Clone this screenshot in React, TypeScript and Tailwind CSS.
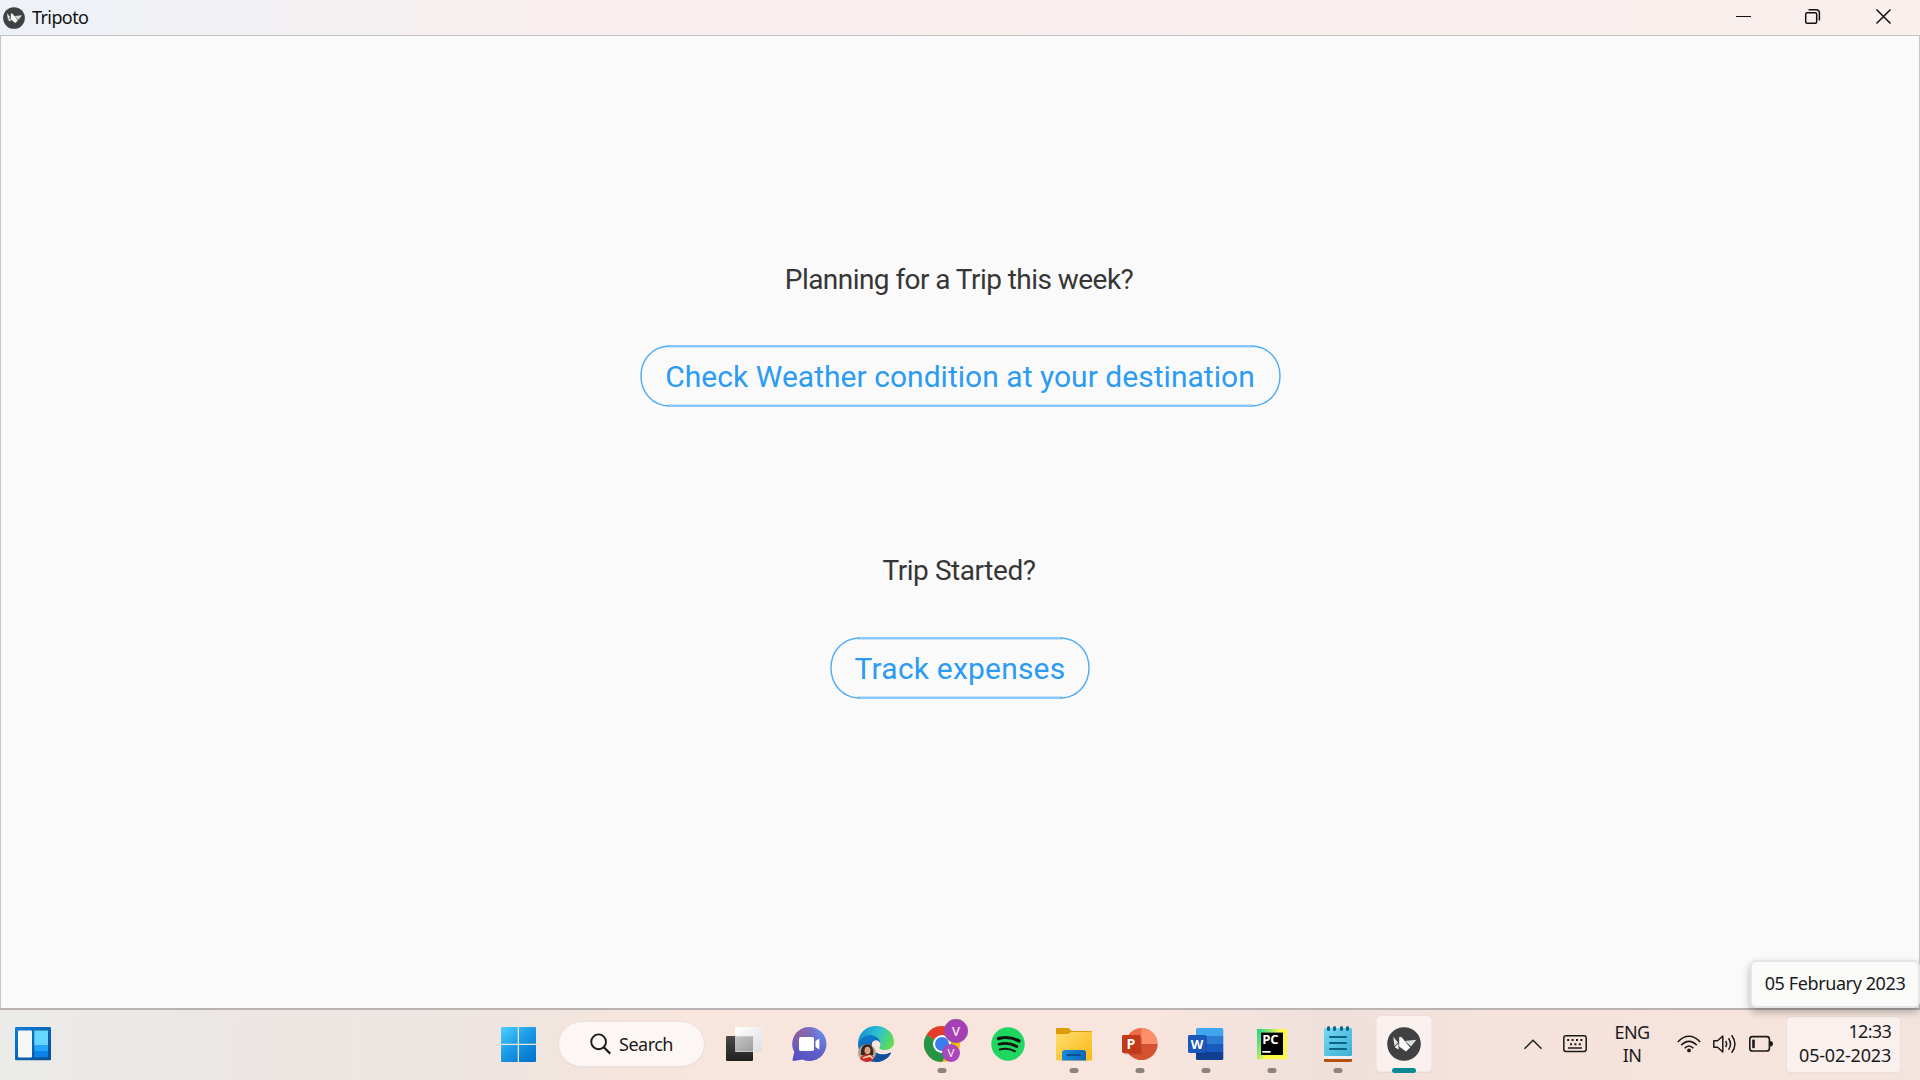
import type { ReactNode } from "react";

/* Bird emblem in a dark disc, drawn on a 34x34 grid. */
function KivyMark() {
  return (
    <>
      <circle cx="17" cy="17" r="16.8" fill="#404143" />
      <path d="M6.2 9.8 L11 15.4 L7.6 19.2 Z" fill="#e8e8e8" />
      <path d="M7.8 20.2 L11.4 16.6 L11.6 22.6 Z" fill="#fff" />
      <path d="M12.2 10 L14.4 10 L23.2 20.4 L19 24.6 L12.2 19.4 Z" fill="#fafafa" />
      <path d="M18 14 L29.4 12.8 L24 19.6 Z" fill="#dcdcdc" />
    </>
  );
}

function Cell({ children, running = false, label }: { children: ReactNode; running?: boolean; label: string }) {
  return (
    <div className="h-[70px] w-[66px] shrink-0" aria-label={label}>
      <svg width="66" height="70" viewBox="0 0 66 70">
        {children}
        {running && <rect x="28.5" y="58" width="9" height="5" rx="2.5" fill="#8d837f" />}
      </svg>
    </div>
  );
}

function Heading({ children, spacing }: { children: ReactNode; spacing: string }) {
  return (
    <h2 className={`flex h-[40px] items-center justify-center whitespace-nowrap text-[28px] leading-[40px] text-[#363636] ${spacing}`}>
      {children}
    </h2>
  );
}

/* Pill button: pale straight edges joined by finer, darker arcs. */
function OutlineButton({ children, width, className }: { children: ReactNode; width: number; className: string }) {
  const r = width - 28;
  return (
    <button
      className={`relative flex h-[62px] items-center justify-center whitespace-nowrap text-[30px] leading-[40px] text-[#2b9bf4] ${className}`}
    >
      <svg className="absolute inset-0" width={width} height="62" viewBox={`0 0 ${width} 62`} fill="none">
        <path d={`M28 1.2 H${r} M28 60.9 H${r}`} stroke="#8cc8f9" strokeWidth="2.6" />
        <path
          d={`M29 1 C13 1.5 1 14 1 31 C1 48 13 60.5 29 61 M${r - 1} 1 C${width - 13} 1.5 ${width - 1} 14 ${width - 1} 31 C${width - 1} 48 ${width - 13} 60.5 ${r - 1} 61`}
          stroke="#4fabf6"
          strokeWidth="1.4"
        />
      </svg>
      <span>{children}</span>
    </button>
  );
}

function TitleBar() {
  return (
    <header className="flex h-[35px] shrink-0 items-center justify-between bg-linear-to-r from-[#edf2f8] via-[#f8efee] via-[28%] to-[#f9f0ee]">
      <div className="flex h-full items-center pl-[3px]">
        <svg width="22" height="22" viewBox="0 0 34 34">
          <KivyMark />
        </svg>
        <span className="mt-[-2px] pl-[7px] text-[18px] leading-[24px] tracking-[-0.6px] text-[#111]">Tripoto</span>
      </div>
      <div className="flex h-full">
        <svg width="210" height="35" viewBox="1710 0 210 35" fill="none" stroke="#111" strokeWidth="1.5">
          <path d="M1736 16.5 H1751" strokeWidth="1" />
          <rect x="1805.7" y="12.7" width="11" height="10.6" rx="1.5" />
          <path d="M1808.5 9.7 H1816 Q1819.4 9.7 1819.4 13 V20.5" />
          <path d="M1876.5 9.5 L1890.5 23.5 M1890.5 9.5 L1876.5 23.5" />
        </svg>
      </div>
    </header>
  );
}

function PinnedApps() {
  return (
    <>
      <Cell label="Task View">
        <defs>
          <linearGradient id="tvDark" x1="0" y1="0" x2="0" y2="1">
            <stop offset="0" stopColor="#4a4a4a" />
            <stop offset="1" stopColor="#1f1f1f" />
          </linearGradient>
          <linearGradient id="tvLight" x1="0" y1="0" x2="1" y2="1">
            <stop offset="0" stopColor="#ffffff" />
            <stop offset="1" stopColor="#dddfe0" />
          </linearGradient>
          <linearGradient id="tvMix" x1="0" y1="0" x2="1" y2="1">
            <stop offset="0" stopColor="#c6c6c6" />
            <stop offset="1" stopColor="#9d9d9d" />
          </linearGradient>
        </defs>
        <rect x="15" y="26" width="27" height="25" rx="1.2" fill="url(#tvDark)" />
        <rect x="24" y="17" width="27" height="25" rx="1.2" fill="url(#tvLight)" />
        <rect x="24" y="26.3" width="18" height="15.2" fill="url(#tvMix)" />
      </Cell>
      <Cell label="Chat">
        <defs>
          <linearGradient id="chat" x1="1" y1="0" x2="0.2" y2="1">
            <stop offset="0" stopColor="#6f9af5" />
            <stop offset="0.5" stopColor="#6264c8" />
            <stop offset="1" stopColor="#5750c4" />
          </linearGradient>
          <radialGradient id="chatGlow" cx="0.2" cy="0.15" r="0.6">
            <stop offset="0" stopColor="#93619f" />
            <stop offset="1" stopColor="#93619f" stopOpacity="0" />
          </radialGradient>
        </defs>
        <path d="M32.5 17 a17 17 0 1 1 -7 32.5 L16.5 51 Q15.2 51 15.5 49.6 L17.3 42 A17 17 0 0 1 32.5 17Z" fill="url(#chat)" />
        <path d="M32.5 17 a17 17 0 1 1 -7 32.5 L16.5 51 Q15.2 51 15.5 49.6 L17.3 42 A17 17 0 0 1 32.5 17Z" fill="url(#chatGlow)" />
        <rect x="22" y="27" width="15" height="14" rx="1.8" fill="#fff" />
        <path d="M38.5 31 L42.4 28.6 V39.6 L38.5 37 Z" fill="#fff" />
      </Cell>
      <Cell label="Edge">
        <defs>
          <linearGradient id="edgeTop" x1="0" y1="0.3" x2="1" y2="0.6">
            <stop offset="0" stopColor="#1a8fd6" />
            <stop offset="0.5" stopColor="#2dbfd0" />
            <stop offset="1" stopColor="#62e04a" />
          </linearGradient>
          <linearGradient id="edgeBody" x1="0" y1="0" x2="0.6" y2="1">
            <stop offset="0" stopColor="#0f7fd0" />
            <stop offset="1" stopColor="#0c59a4" />
          </linearGradient>
          <clipPath id="edgeBadge">
            <circle cx="24" cy="43" r="9" />
          </clipPath>
        </defs>
        <path d="M15 34 C15 23 23 16 33 16 C44 16 51 24 51 31.5 C51 37 47 40 42 40 C38 40 35.8 38.8 36.6 37.2 C38.5 34.5 37.5 29 32.5 27 C25 24.5 18 28 15 34Z" fill="url(#edgeTop)" />
        <path d="M15 34 C17 27.5 23 24.5 29 25.2 C34 26 38 30 37.4 34 C36.5 30 31 28.8 29 33 C27 39 33 45 41 44.6 C44.5 44.4 46.5 43 48 42.6 C47 47 41 52 33 52 C23 52 15 44.5 15 34Z" fill="url(#edgeBody)" />
        <path d="M29 33.2 C27 39 33 45 41 44.6 C44.5 44.4 46 43 48 42.6 C46 47 41 52 34 52 C27 50 23 37 29 33.2Z" fill="#10509b" />
        <g clipPath="url(#edgeBadge)">
          <rect x="15" y="34" width="18" height="18" fill="#b5a58f" />
          <path d="M18 45 C17 37 21 34 25 34 C30 35 31 41 30 45 Z" fill="#3a2525" />
          <ellipse cx="24.5" cy="40.5" rx="3" ry="3.8" fill="#d9a080" />
          <path d="M16 49 L21 44.5 L29 45 L33 49 V53 H16Z" fill="#c92c27" />
          <path d="M20 48 L27 45.8 L30 48.5" stroke="#f0c4a8" strokeWidth="1.8" fill="none" />
        </g>
      </Cell>
      <Cell label="Chrome" running>
        <circle cx="33" cy="34" r="18" fill="#fbbc04" />
        <path d="M33 34 L17.4 25 A18 18 0 0 1 48.6 25 Z" fill="#e33b2e" />
        <path d="M33 34 L17.4 25 A18 18 0 0 0 33 52 L40.8 38.5 Z" fill="#259447" />
        <circle cx="33" cy="34" r="9" fill="#fff" />
        <circle cx="33" cy="34" r="7" fill="#3b7ded" />
        <circle cx="47" cy="21" r="11.7" fill="#a63fb5" stroke="#8c5b92" strokeWidth="0.8" />
        <circle cx="42" cy="43" r="9" fill="#ab47bc" />
        <text x="47" y="26" textAnchor="middle" fontFamily="Roboto, sans-serif" fontSize="13" fontWeight="500" fill="#efdcf2">V</text>
        <text x="42" y="47.3" textAnchor="middle" fontFamily="Roboto, sans-serif" fontSize="11.5" fill="#f7ecf9">V</text>
      </Cell>
      <Cell label="Spotify">
        <circle cx="33" cy="34" r="16.7" fill="#1ed760" />
        <g fill="none" stroke="#12150f" strokeLinecap="round">
          <path d="M23.4 28.6 Q34 25.5 44 31" strokeWidth="3.2" />
          <path d="M24 34.2 Q33.5 31.6 41.8 36.5" strokeWidth="2.7" />
          <path d="M24.8 39.4 Q33 37.4 39.8 41.2" strokeWidth="2.1" />
        </g>
      </Cell>
      <Cell label="File Explorer" running>
        <defs>
          <linearGradient id="folder" x1="0" y1="0" x2="1" y2="1">
            <stop offset="0" stopColor="#ffdc72" />
            <stop offset="1" stopColor="#fbb90f" />
          </linearGradient>
          <linearGradient id="folderTray" x1="0" y1="0" x2="1" y2="0">
            <stop offset="0" stopColor="#1789dc" />
            <stop offset="1" stopColor="#0a67b8" />
          </linearGradient>
        </defs>
        <path d="M15 19.2 Q15 18 16.2 18 H26.5 Q27.6 18 28.4 18.8 L30.8 21 H50 Q51 21 51 22 V30 H15Z" fill="#dd9b08" />
        <path d="M15 24 H27 L30.5 22 H51 V49.3 Q51 50.5 49.8 50.5 H16.2 Q15 50.5 15 49.3Z" fill="url(#folder)" />
        <path d="M21 50.5 V43 Q21 40 24 40 H42 Q45 40 45 43 V50.5Z" fill="url(#folderTray)" />
        <rect x="25.5" y="44.2" width="14.5" height="1.8" rx="0.8" fill="#0a4a86" />
      </Cell>
      <Cell label="PowerPoint" running>
        <circle cx="34.5" cy="34" r="16" fill="#ed6c47" />
        <path d="M34.5 18 A16 16 0 0 1 50.5 34 H34.5Z" fill="#ff8f6b" />
        <path d="M18.5 34 A16 16 0 0 0 50.5 34Z" fill="#d35230" />
        <rect x="17" y="26.5" width="17.5" height="18" rx="1.5" fill="#8f2c15" opacity="0.35" />
        <rect x="15" y="25" width="18.3" height="18" rx="1.4" fill="#c13b1b" />
        <text x="24" y="38.9" textAnchor="middle" fontFamily="Open Sans, sans-serif" fontSize="14" fontWeight="700" fill="#fff">P</text>
      </Cell>
      <Cell label="Word" running>
        <defs>
          <clipPath id="wordDoc">
            <rect x="23" y="18" width="27.3" height="32" rx="1.5" />
          </clipPath>
        </defs>
        <g clipPath="url(#wordDoc)">
          <rect x="23" y="18" width="28" height="8" fill="#41a5ee" />
          <rect x="23" y="26" width="28" height="8" fill="#2b7cd3" />
          <rect x="23" y="34" width="28" height="8" fill="#185abd" />
          <rect x="23" y="42" width="28" height="8" fill="#103f91" />
          <rect x="23" y="26.5" width="11" height="18" fill="#0b2f70" opacity="0.35" />
        </g>
        <rect x="15" y="25" width="18.3" height="18" rx="1.4" fill="#1a58ba" />
        <text x="24" y="38.7" textAnchor="middle" fontFamily="Open Sans, sans-serif" fontSize="13" fontWeight="700" fill="#fff">W</text>
      </Cell>
      <Cell label="PyCharm" running>
        <defs>
          <linearGradient id="pycharm" x1="0" y1="0.1" x2="0.75" y2="0.5">
            <stop offset="0" stopColor="#21d789" />
            <stop offset="0.35" stopColor="#7be570" />
            <stop offset="0.75" stopColor="#fcf84a" />
          </linearGradient>
        </defs>
        <rect x="18" y="19" width="30" height="30.3" fill="url(#pycharm)" />
        <rect x="22" y="22.6" width="22" height="22.4" fill="#000" />
        <text x="23.2" y="34" textLength="16.5" lengthAdjust="spacingAndGlyphs" fontFamily="Open Sans, sans-serif" fontSize="12" fontWeight="700" fill="#fff">PC</text>
        <rect x="23.3" y="41" width="8.3" height="1.7" fill="#fff" />
      </Cell>
      <Cell label="Notepad" running>
        <defs>
          <linearGradient id="notepad" x1="0" y1="0" x2="1" y2="1">
            <stop offset="0" stopColor="#74d8f4" />
            <stop offset="1" stopColor="#3dafd3" />
          </linearGradient>
        </defs>
        <rect x="19" y="44" width="28" height="8" rx="1.2" fill="#b4510f" />
        <rect x="19" y="43" width="28" height="6" fill="#eceff1" />
        <rect x="19" y="18" width="28" height="28" rx="1.2" fill="url(#notepad)" />
        <g fill="#0d6386">
          <rect x="22" y="16" width="3" height="5" rx="1.5" />
          <rect x="28" y="16" width="3" height="5" rx="1.5" />
          <rect x="35" y="16" width="3" height="5" rx="1.5" />
          <rect x="41" y="16" width="3" height="5" rx="1.5" />
          <rect x="24" y="26" width="18" height="2" rx="0.8" />
          <rect x="24" y="32" width="18" height="2" rx="0.8" />
          <rect x="24" y="38" width="18" height="2" rx="0.8" />
        </g>
      </Cell>
      <Cell label="Tripoto">
        <rect x="5" y="6" width="56" height="57" rx="5" fill="#e8d8d3" />
        <rect x="5" y="5.5" width="56" height="56.5" rx="5" fill="#faf0ed" stroke="#ecdcd7" strokeWidth="0.8" />
        <g transform="translate(16 17)">
          <KivyMark />
        </g>
        <rect x="21" y="58" width="24" height="5" rx="2.5" fill="#0b8a96" />
      </Cell>
    </>
  );
}

function Taskbar() {
  return (
    <footer className="flex h-[70px] shrink-0 items-center bg-[linear-gradient(90deg,#ebebe9_0%,#ece7e4_12%,#eee5e1_25%,#f8e5dc_36%,#f8e5de_60%,#efe0dc_69%,#f5e2dc_78%,#f7e4dc_92%,#f3e4dd_100%)] text-[#1b1b1b]">
      <svg className="mt-[-2px] ml-[15px]" width="36" height="34" viewBox="0 0 36 34">
        <defs>
          <linearGradient id="widgets" x1="0" y1="0" x2="1" y2="1">
            <stop offset="0" stopColor="#0a80d6" />
            <stop offset="1" stopColor="#0b4a92" />
          </linearGradient>
        </defs>
        <rect width="36" height="33.3" rx="1.2" fill="url(#widgets)" />
        <rect x="3" y="3.5" width="14" height="27" rx="1" fill="#f7f7f7" />
        <rect x="19.3" y="3.5" width="13.7" height="14.5" fill="#64d6ff" />
        <rect x="19.3" y="18" width="13.7" height="6" fill="#22a4fa" />
        <rect x="19.3" y="24" width="13.7" height="6.3" fill="#0a83ea" />
      </svg>
      <svg className="mt-[-1px] ml-[450px]" width="35" height="35" viewBox="0 0 35 35">
        <defs>
          <linearGradient id="start" gradientUnits="userSpaceOnUse" x1="0" y1="0" x2="30" y2="35">
            <stop offset="0" stopColor="#4dd0fd" />
            <stop offset="0.5" stopColor="#1c9be6" />
            <stop offset="1" stopColor="#0272cf" />
          </linearGradient>
        </defs>
        <g fill="url(#start)">
          <path d="M1 0 H16.7 V16.7 H0 V1 Q0 0 1 0Z" />
          <path d="M18 0 H34 Q35 0 35 1 V16.7 H18Z" />
          <path d="M0 18 H16.7 V35 H1 Q0 35 0 34Z" />
          <path d="M18 18 H35 V34 Q35 35 34 35 H18Z" />
        </g>
      </svg>
      <div className="mt-[-1px] ml-[22px] flex h-[47px] w-[147px] items-center rounded-full border border-b-2 border-[#efdfda] bg-[#fcf6f4] pl-[31px]">
        <svg width="22" height="22" viewBox="0 0 22 22" fill="none" stroke="#1b1b1b" strokeWidth="1.9">
          <circle cx="8.6" cy="8.8" r="7.4" />
          <path d="M13.8 14.2 L20.2 20.6" strokeWidth="2.2" />
        </svg>
        <span className="pl-[7px] text-[18px] leading-[24px] tracking-[-0.5px]">Search</span>
      </div>
      <div className="ml-[6px] flex h-[70px]">
        <PinnedApps />
      </div>
      <svg className="mt-[-2px] ml-[87px]" width="18" height="11" viewBox="0 0 18 11" fill="none" stroke="#1b1b1b" strokeWidth="1.4">
        <path d="M0.5 9.7 L9 1.3 L17.5 9.7" />
      </svg>
      <svg className="mt-[-2px] ml-[21px]" width="24" height="18" viewBox="0 0 24 18" fill="none" stroke="#1b1b1b" strokeWidth="1.5">
        <rect x="0.8" y="0.8" width="22.4" height="15.6" rx="2.2" />
        <path d="M4.2 5 H20 M7 9.3 H18" strokeWidth="2" strokeDasharray="2 2.4" />
        <path d="M5 13 H19" />
      </svg>
      <div className="mt-[-2px] ml-[20px] w-[50px] text-center text-[18px] leading-[23px] tracking-[-0.6px]">
        <div>ENG</div>
        <div>IN</div>
      </div>
      <svg className="mt-[-2px] ml-[20px]" width="24" height="18" viewBox="0 0 24 18" fill="none" stroke="#1b1b1b" strokeWidth="1.6">
        <path d="M0.8 7 Q12 -4.4 23.2 7" />
        <path d="M4.2 10.3 Q12 2.4 19.8 10.3" />
        <path d="M7.6 13.3 Q12 8.6 16.4 13.3" />
        <circle cx="12" cy="15.4" r="1.9" fill="#1b1b1b" stroke="none" />
      </svg>
      <svg className="mt-[-2px] ml-[12px]" width="24" height="20" viewBox="0 0 24 20" fill="none" stroke="#1b1b1b" strokeWidth="1.5">
        <path d="M0.8 6.7 H4.5 L9.8 2 V18 L4.5 13.3 H0.8Z" strokeLinejoin="round" />
        <path d="M12.6 7 Q14.6 10 12.6 13 M15.5 4.2 Q19.6 10 15.5 15.8 M18.6 1.2 Q25.4 10 18.6 18.8" />
      </svg>
      <svg className="mt-[-2px] ml-[12px]" width="24" height="18" viewBox="0 0 24 18">
        <rect x="0.8" y="1.6" width="19.6" height="14.4" rx="2.6" fill="none" stroke="#1b1b1b" strokeWidth="1.6" />
        <rect x="3.2" y="4.4" width="2.6" height="8.8" rx="0.8" fill="#1b1b1b" />
        <path d="M20.8 6 Q24 6 24 8.8 Q24 11.6 20.8 11.6Z" fill="#1b1b1b" />
      </svg>
      <div className="ml-[13px] mt-[-1px] h-[58px] w-[115px] whitespace-nowrap rounded-[5px] border border-b-2 border-[#ecdfda] bg-[#faf0ed] pt-[2px] pr-[9px] text-right text-[18px] leading-[24px]">
        <div className="tracking-[-0.7px]">12:33</div>
        <div className="tracking-[-0.2px]">05-02-2023</div>
      </div>
    </footer>
  );
}

export default function App() {
  return (
    <div className="relative flex h-[1080px] w-[1920px] flex-col overflow-hidden font-['Noto_Sans',sans-serif]">
      <TitleBar />
      <main className="flex h-[975px] shrink-0 flex-col items-center border-x border-t border-b-2 border-[#c6c6c6] border-b-[#b9b2b0] bg-[#fafafa] font-[Roboto,sans-serif]">
        <div className="mt-[224px] mr-[2px]">
          <Heading spacing="tracking-[-0.55px]">Planning for a Trip this week?</Heading>
        </div>
        <div className="mt-[45px]">
          <OutlineButton width={641} className="w-[641px] pt-[2px] tracking-[0.03px]">Check Weather condition at your destination</OutlineButton>
        </div>
        <div className="mt-[144px] mr-[2px]">
          <Heading spacing="tracking-[-0.45px]">Trip Started?</Heading>
        </div>
        <div className="mt-[46px]">
          <OutlineButton width={260} className="w-[260px] pt-[1px] tracking-[0.2px]">Track expenses</OutlineButton>
        </div>
      </main>
      <Taskbar />
      <div className="absolute left-[1750px] top-[960px] flex h-[48px] w-[170px] items-center justify-center whitespace-nowrap rounded-[6px] border-2 border-[#e6e6e6] bg-[#fafaf9] pb-[1px] text-[18px] tracking-[-0.4px] text-[#1b1b1b] shadow-[0_4px_8px_rgba(0,0,0,0.28)]">
        05 February 2023
      </div>
    </div>
  );
}
